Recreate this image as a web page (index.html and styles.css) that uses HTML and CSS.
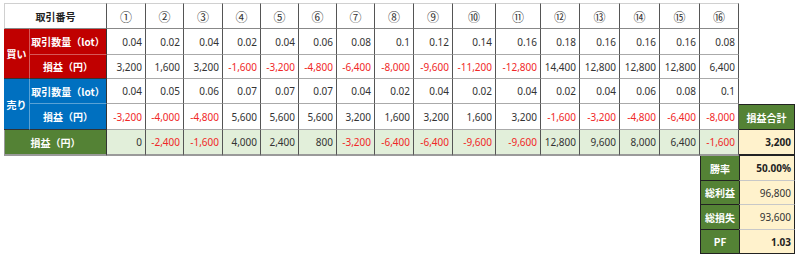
FILE: index.html
```html
<!DOCTYPE html>
<html lang="ja">
<head>
<meta charset="utf-8">
<title>取引表</title>
<link rel="stylesheet" href="styles.css">
</head>
<body>
<div class="sheet">
  <!-- header -->
  <div class="c hd title">取引番号</div>
  <div class="c hd">①</div><div class="c hd">②</div><div class="c hd">③</div><div class="c hd">④</div>
  <div class="c hd">⑤</div><div class="c hd">⑥</div><div class="c hd">⑦</div><div class="c hd">⑧</div>
  <div class="c hd">⑨</div><div class="c hd">⑩</div><div class="c hd">⑪</div><div class="c hd">⑫</div>
  <div class="c hd">⑬</div><div class="c hd">⑭</div><div class="c hd">⑮</div><div class="c hd">⑯</div>
  <div class="c blank"></div>

  <!-- buy -->
  <div class="c side buy">買い</div>
  <div class="c lbl buy">取引数量（lot）</div>
  <div class="c num">0.04</div><div class="c num">0.02</div><div class="c num">0.04</div><div class="c num">0.02</div>
  <div class="c num">0.04</div><div class="c num">0.06</div><div class="c num">0.08</div><div class="c num">0.1</div>
  <div class="c num">0.12</div><div class="c num">0.14</div><div class="c num">0.16</div><div class="c num">0.18</div>
  <div class="c num">0.16</div><div class="c num">0.16</div><div class="c num">0.16</div><div class="c num">0.08</div>
  <div class="c blank"></div>

  <div class="c lbl buy lbl2">損益（円）</div>
  <div class="c num">3,200</div><div class="c num">1,600</div><div class="c num">3,200</div><div class="c num neg">-1,600</div>
  <div class="c num neg">-3,200</div><div class="c num neg">-4,800</div><div class="c num neg">-6,400</div><div class="c num neg">-8,000</div>
  <div class="c num neg">-9,600</div><div class="c num neg">-11,200</div><div class="c num neg">-12,800</div><div class="c num">14,400</div>
  <div class="c num">12,800</div><div class="c num">12,800</div><div class="c num">12,800</div><div class="c num">6,400</div>
  <div class="c blank"></div>

  <!-- sell -->
  <div class="c side sell">売り</div>
  <div class="c lbl sell">取引数量（lot）</div>
  <div class="c num">0.04</div><div class="c num">0.05</div><div class="c num">0.06</div><div class="c num">0.07</div>
  <div class="c num">0.07</div><div class="c num">0.07</div><div class="c num">0.04</div><div class="c num">0.02</div>
  <div class="c num">0.04</div><div class="c num">0.02</div><div class="c num">0.04</div><div class="c num">0.02</div>
  <div class="c num">0.04</div><div class="c num">0.06</div><div class="c num">0.08</div><div class="c num">0.1</div>
  <div class="c blank"></div>

  <div class="c lbl sell lbl2">損益（円）</div>
  <div class="c num neg">-3,200</div><div class="c num neg">-4,000</div><div class="c num neg">-4,800</div><div class="c num">5,600</div>
  <div class="c num">5,600</div><div class="c num">5,600</div><div class="c num">3,200</div><div class="c num">1,600</div>
  <div class="c num">3,200</div><div class="c num">1,600</div><div class="c num">3,200</div><div class="c num neg">-1,600</div>
  <div class="c num neg">-3,200</div><div class="c num neg">-4,800</div><div class="c num neg">-6,400</div><div class="c num neg">-8,000</div>
  <div class="c sumhd">損益合計</div>

  <!-- total -->
  <div class="c totlbl">損益（円）</div>
  <div class="c num tot">0</div><div class="c num tot neg">-2,400</div><div class="c num tot neg">-1,600</div><div class="c num tot">4,000</div>
  <div class="c num tot">2,400</div><div class="c num tot">800</div><div class="c num tot neg">-3,200</div><div class="c num tot neg">-6,400</div>
  <div class="c num tot neg">-6,400</div><div class="c num tot neg">-9,600</div><div class="c num tot neg">-9,600</div><div class="c num tot">12,800</div>
  <div class="c num tot">9,600</div><div class="c num tot">8,000</div><div class="c num tot">6,400</div><div class="c num tot neg">-1,600</div>
  <div class="c sumval bold">3,200</div>

  <!-- summary -->
  <div class="spacer"></div>
  <div class="c slbl first">勝率</div><div class="c sval first bold">50.00%</div>
  <div class="c slbl">総利益</div><div class="c sval">96,800</div>
  <div class="c slbl">総損失</div><div class="c sval">93,600</div>
  <div class="c slbl last">PF</div><div class="c sval last bold">1.03</div>
</div>
</body>
</html>
```

FILE: styles.css
```css
body {
  margin: 0;
  padding: 3px 0 0 4px;
  background: #fff;
  font-family: "Noto Sans", "Noto Sans CJK JP", sans-serif;
  font-size: 10px;
  color: #333;
}

.sheet {
  display: grid;
  grid-template-columns: 26px 77px 39px 38px 39px 38px 38px 38px 38px 39px 39px 43px 45px 39px 40px 40px 40px 39px 56px;
  grid-template-rows: 26px 26px 24px 25px 26px 26px 25px 24px 25px 24px;
}

.c {
  box-sizing: border-box;
  display: flex;
  align-items: center;
  white-space: nowrap;
}

.hd {
  justify-content: center;
  border-top: 1px solid #d0d0d0;
  border-right: 1px solid #555;
  border-bottom: 1px solid #888;
  font-family: "Noto Sans CJK JP", sans-serif;
  font-size: 12px;
  color: #333;
}

.title {
  grid-column: span 2;
  font-weight: bold;
  color: #222;
  font-size: 10px;
  border-left: 1px solid #d0d0d0;
}

.num {
  justify-content: flex-end;
  padding-right: 3px;
  border-right: 1px solid #555;
  border-bottom: 1px solid #aaa;
}

.neg { color: #f02828; }

.side, .lbl, .totlbl, .sumhd, .slbl {
  justify-content: center;
  color: #fff;
  font-weight: bold;
  font-family: "Noto Sans CJK JP", sans-serif;
  font-size: 10px;
}

.side {
  grid-row: span 2;
  border-right: 1px solid rgba(255, 255, 255, 0.35);
  border-bottom: 1px solid #333;
}

.lbl {
  border-bottom: 1px solid rgba(255, 255, 255, 0.35);
  border-right: 1px solid #333;
}

.lbl2 { border-bottom: 1px solid #333; }

.buy { background: #c00000; }
.sell { background: #0070c0; }

.totlbl {
  grid-column: span 2;
  background: #548235;
  border-right: 1px solid #333;
  border-bottom: 2px solid #9a9a9a;
  border-left: 1px solid #9a9a9a;
}

.tot {
  background: #e2efda;
  border-bottom: 2px solid #9a9a9a;
}

.sumhd {
  background: #548235;
  border: 1px solid #222;
  border-left: none;
}

.sumval {
  background: #fff2cc;
  justify-content: flex-end;
  padding-right: 3px;
  border-right: 1px solid #222;
  border-bottom: 2px solid #222;
}

.bold { font-weight: bold; color: #222; }

.spacer {
  grid-column: 1 / 18;
  grid-row: 7 / 11;
}

.slbl {
  background: #548235;
  border-left: 1px solid #222;
  border-bottom: 1px solid #222;
}

.sval {
  background: #fff2cc;
  justify-content: flex-end;
  padding-right: 3px;
  border-left: 1px solid #222;
  border-right: 1px solid #222;
  border-bottom: 1px solid #c8c8c8;
}

.slbl.last, .sval.last { border-bottom: 1px solid #222; }

.blank { }
```
